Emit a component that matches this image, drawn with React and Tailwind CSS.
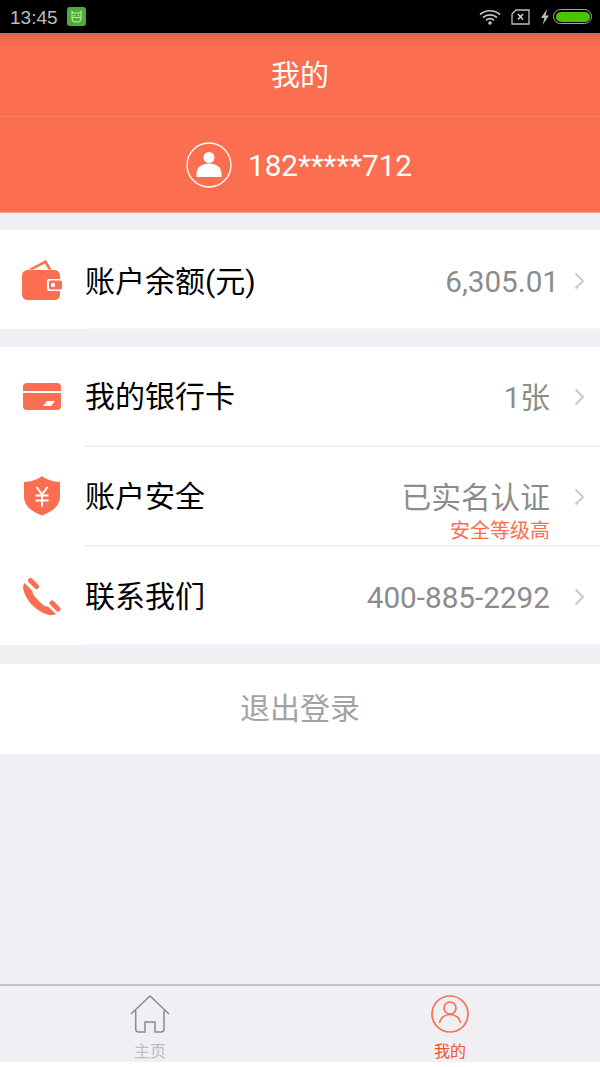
const cjk = { fontFamily: 'Roboto, "Noto Sans CJK SC", sans-serif' };

function Wallet() {
  return (
    <svg width="40" height="41" viewBox="0 0 40 41">
      <path d="M6 9.500 L24 0 L29.500 9.500 L26.500 9.500 L23 3.500 L11 9.500 Z" fill="#fc6e51" />
      <rect x="0" y="10" width="38" height="30" rx="5.500" fill="#fc6e51" />
      <rect x="25" y="19" width="15" height="12" rx="2" fill="#fff" />
      <rect x="27" y="20.500" width="13" height="9" rx="1.500" fill="#fc6e51" />
      <circle cx="31" cy="25" r="2.200" fill="#fff" />
    </svg>
  );
}

function Card() {
  return (
    <svg width="40" height="28" viewBox="0 0 40 28">
      <path d="M5 0 H35 A4 4 0 0 1 39 4 V8 H1 V4 A4 4 0 0 1 5 0 Z" fill="#fc6e51" />
      <path d="M1 10 H39 V23 A4 4 0 0 1 35 27 H5 A4 4 0 0 1 1 23 Z" fill="#fc6e51" />
      <path d="M25 18 H33 L29 23 H21 Z" fill="#fff" />
    </svg>
  );
}

function Shield() {
  return (
    <svg width="38" height="40" viewBox="0 0 38 40" className="-mt-[2px] ml-[1px]">
      <path d="M19 0 C24 4 30 5.500 37 6 V20 C37 30 29 36 19 39.500 C9 36 1 30 1 20 V6 C8 5.500 14 4 19 0 Z" fill="#fc6e51" />
      <path d="M13.500 11 L19 18.500 L24.500 11 M12.500 19.500 H25.500 M12.500 24.500 H25.500 M19 18.500 V30.500" stroke="#fff" strokeWidth="2" fill="none" />
    </svg>
  );
}

function Phone() {
  return (
    <svg width="40" height="40" viewBox="0 0 40 40">
      <path d="M8.500 3.500 L14.500 9.500 M30 26 L36 32" stroke="#fc6e51" strokeWidth="5" strokeLinecap="round" fill="none" />
      <path d="M2.500 6 L10.500 14 Q10 17 13 20 L20 27 Q23 30 26 29.500 L34 37 Q30 39 25 37.500 C12 33 3 22 1 11 Q1 8 2.500 6 Z" fill="#fc6e51" />
    </svg>
  );
}

function Chevron() {
  return (
    <svg width="11" height="18" viewBox="0 0 11 18" className="shrink-0">
      <path d="M1.500 1.500 L9 9 L1.500 16.500" stroke="#c9c9cc" strokeWidth="2" fill="none" />
    </svg>
  );
}

function Row({ icon, label, value, sub, border, rowCls, textCls, valueCls, gapCls }) {
  return (
    <div className={`relative flex items-center bg-white ${rowCls}`}>
      <div className="flex w-[85px] shrink-0 justify-start pl-[22px]">{icon}</div>
      <div className={`flex-1 text-[30px] leading-none text-black ${textCls}`}>{label}</div>
      <div className={`text-[29.700px] leading-none text-[#8c8c8c] ${valueCls}`}>{value}</div>
      <div className={`mr-[15px] flex items-center ${gapCls}`}><Chevron /></div>
      {sub && (
        <div className="absolute right-[50px] top-[74px] text-[20px] leading-none text-[#fc6e51]">{sub}</div>
      )}
      {border && <div className="absolute bottom-0 left-[85px] right-0 h-[2px] bg-[#f0f0f2]" />}
      {!border && <div className="absolute bottom-0 left-[85px] right-0 h-[1px] bg-[#f6f6f8]" />}
    </div>
  );
}

export default function App() {
  return (
    <div className="flex h-[1067px] w-[600px] flex-col overflow-hidden bg-[#efeff4]" style={cjk}>
      <div className="flex h-[33px] shrink-0 items-center bg-black pl-[10px] pr-[8px]">
        <span className="mt-[1px] text-[19px] leading-none text-[#bdbdbd]" style={{ fontFamily: '"Liberation Sans", sans-serif' }}>13:45</span>
        <svg width="19" height="19" viewBox="0 0 19 19" className="ml-[9px]">
          <rect width="19" height="19" rx="3" fill="#4fae36" />
          <path d="M5 4.500 L6.500 6 H12.500 L14 4.500 V12 A3.500 3.500 0 0 1 10.500 15 H8.500 A3.500 3.500 0 0 1 5 12 Z M5 10.500 H14" stroke="#bfe8b0" strokeWidth="1.100" fill="none" />
          <circle cx="7.500" cy="8.500" r="0.800" fill="#bfe8b0" />
          <circle cx="11.500" cy="8.500" r="0.800" fill="#bfe8b0" />
        </svg>
        <div className="flex-1" />
        <svg width="22" height="16" viewBox="0 0 22 16">
          <path d="M1 5.500 C6.500 0.500 15.500 0.500 21 5.500 M4 8.500 C8 5 14 5 18 8.500 M7 11.300 C9.500 9.300 12.500 9.300 15 11.300" stroke="#c4c4c4" strokeWidth="1.700" fill="none" />
          <circle cx="11" cy="14" r="1.800" fill="#c4c4c4" />
        </svg>
        <svg width="19" height="16" viewBox="0 0 19 16" className="ml-[10px]">
          <path d="M5 1 H18 V15 H1 V5 Z" stroke="#bdbdbd" strokeWidth="1.300" fill="none" />
          <path d="M7 5 L12 10.500 M12 5 L7 10.500" stroke="#d5d5d5" strokeWidth="1.500" />
        </svg>
        <svg width="10" height="16" viewBox="0 0 10 16" className="ml-[10px]">
          <path d="M7 0 L1 9 H4.500 L2.500 16 L9 6.500 H5.500 Z" fill="#bdbdbd" />
        </svg>
        <div className="ml-[3px] flex h-[15px] w-[39px] items-center rounded-full border border-[#a8a8a8] p-[1.500px]">
          <div className="h-full w-full rounded-full bg-[#4cc404]" />
        </div>
      </div>

      <div className="shrink-0 bg-[#fb6e50]">
        <div className="flex h-[84px] items-center justify-center border-b border-[#fc8066] bg-gradient-to-b from-[#dc6549] from-0% to-[#fb6e50] to-[14%] pt-[3px] text-[29px] leading-none text-white">
          我的
        </div>
        <div className="flex h-[96px] items-center justify-center gap-[16px] border-b border-[#f5a58f] pr-[2px]">
          <svg width="46" height="46" viewBox="0 0 46 46">
            <circle cx="23" cy="23" r="22" stroke="#fff" strokeWidth="1.300" fill="none" />
            <circle cx="23" cy="15.500" r="5.500" fill="#fff" />
            <path d="M10.500 35 V32 C10.500 25 16 21.500 23 21.500 C30 21.500 35.500 25 35.500 32 V35 Z" fill="#fff" />
          </svg>
          <span className="mt-[2px] text-[29.700px] leading-none text-white">182*****712</span>
        </div>
      </div>

      <div className="mt-[17px] shrink-0">
        <Row icon={<Wallet />} label="账户余额(元)" value="6,305.01" rowCls="h-[99px] pt-[2px]" textCls="mt-[2px]" valueCls="mt-[3px]" gapCls="ml-[15px]" />
      </div>
      <div className="mt-[18px] shrink-0">
        <Row icon={<Card />} label="我的银行卡" value="1张" border rowCls="h-[100px]" textCls="" valueCls="mt-[1px]" gapCls="ml-[24px]" />
        <Row icon={<Shield />} label="账户安全" value="已实名认证" sub="安全等级高" border rowCls="h-[100px]" textCls="" valueCls="mt-[1px]" gapCls="ml-[24px]" />
        <Row icon={<Phone />} label="联系我们" value="400-885-2292" rowCls="h-[98px] pt-[2px]" textCls="" valueCls="mt-[2px]" gapCls="ml-[24px]" />
      </div>

      <div className="mt-[19px] flex h-[90px] shrink-0 items-center justify-center bg-white text-[30px] leading-none text-[#a3a3a3]">
        退出登录
      </div>

      <div className="flex-1" />

      <div className="flex h-[78px] shrink-0 border-t-2 border-[#c2c2c6] bg-[#efeff4]">
        <div className="flex flex-1 flex-col items-center pt-[9px]">
          <svg width="40" height="38" viewBox="0 0 40 38">
            <path d="M1 19 L20 1 L39 19 M5.700 15.500 V34 Q5.700 37 8.500 37 H15 V27 H25 V37 H31 Q34 37 34 34 V15.500" stroke="#8c8c8c" strokeWidth="1.500" fill="none" />
          </svg>
          <span className="mt-[11px] text-[16px] leading-none text-[#bdbdbd]">主页</span>
        </div>
        <div className="flex flex-1 flex-col items-center pt-[9px]">
          <svg width="38" height="38" viewBox="0 0 38 38">
            <circle cx="19" cy="19" r="18" stroke="#fc6e51" strokeWidth="1.700" fill="none" />
            <circle cx="19" cy="13" r="6" stroke="#fc6e51" strokeWidth="1.700" fill="none" />
            <path d="M8.500 28 C9 23 13.500 19.500 19 19.500 C24.500 19.500 29 23 29.500 28" stroke="#fc6e51" strokeWidth="1.700" fill="none" />
          </svg>
          <span className="mt-[11px] text-[16px] leading-none text-[#f0562e]">我的</span>
        </div>
      </div>
      <div className="h-[5px] shrink-0 bg-white" />
    </div>
  );
}
